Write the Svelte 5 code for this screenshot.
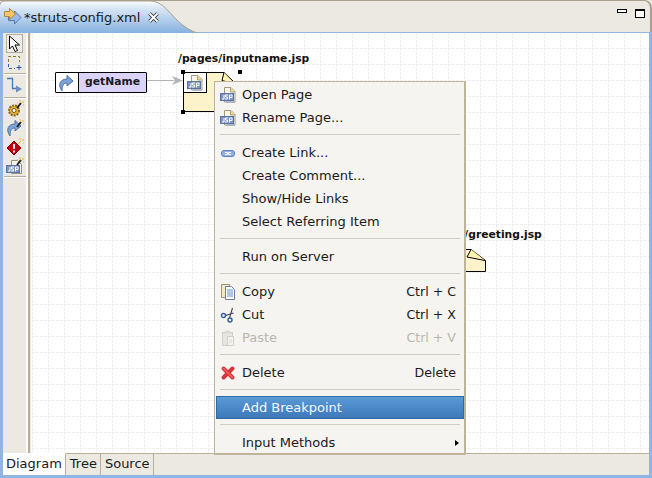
<script>
  const menu = [
    { label: "Open Page", icon: "jsp" },
    { label: "Rename Page...", icon: "jsp" },
    { sep: true },
    { label: "Create Link...", icon: "link" },
    { label: "Create Comment..." },
    { label: "Show/Hide Links" },
    { label: "Select Referring Item" },
    { sep: true },
    { label: "Run on Server" },
    { sep: true },
    { label: "Copy", icon: "copy", key: "Ctrl + C" },
    { label: "Cut", icon: "cut", key: "Ctrl + X" },
    { label: "Paste", icon: "paste", key: "Ctrl + V", disabled: true },
    { sep: true },
    { label: "Delete", icon: "delete", key: "Delete" },
    { sep: true },
    { label: "Add Breakpoint", active: true },
    { sep: true },
    { label: "Input Methods", sub: true },
  ];
  const tabs = ["Diagram", "Tree", "Source"];
</script>

{#snippet jsp()}
  <svg width="16" height="16" viewBox="0 0 16 16">
    <path d="M4.500 0.500h6.500l4 4v10.500h-10.500z" fill="#f8f6ee" stroke="#a89a78" />
    <path d="M10.500 0.500v4.500h4.500" fill="#ecd98c" stroke="#b5a36a" />
    <rect x="0.500" y="6.500" width="13" height="7" fill="#7d94c0" stroke="#5a74a4" />
    <path d="M4 8v4h-2M8 8h-2.500v2h2v2h-2.500M9.500 12.500v-4.500h2.500v2.500h-2.500" fill="none" stroke="#fff" />
    <path d="M6 15h9" stroke="#8fa3c8" />
  </svg>
{/snippet}

{#snippet sparkle()}
  <path d="M11 8l4-5" stroke="#222" stroke-width="2" />
  <path d="M13 1h2M17 1v2M17 5h1M11 3h1" stroke="#e8b820" />
{/snippet}

{#snippet curved()}
  <path d="M4 17C-1 10 3 5 9 5V1.500l6 5.500-6 5V9C5 9 4 12 4 17z" fill="#7ea3d8" stroke="#4a70a8" />
{/snippet}

<div class="view">
  <header class="head">
    <svg class="tab-bg" width="200" height="33" viewBox="0 0 200 33">
      <defs>
        <linearGradient id="tabfill" x1="0" y1="0" x2="0" y2="1">
          <stop offset="0" stop-color="#ffffff" />
          <stop offset="0.2" stop-color="#dce8f6" />
          <stop offset="1" stop-color="#86b2e0" />
        </linearGradient>
      </defs>
      <path d="M0 33V5Q0 1 5 1H150C168 1 172 24 197 33Z" fill="url(#tabfill)" />
      <path d="M0 5Q0 1 5 1H150C168 1 172 24 197 33" fill="none" stroke="#a9a08c" />
    </svg>
    <div class="tab">
      <svg width="20" height="20" viewBox="0 0 20 20">
        <path d="M5.500 7.500h6v-3.500l6.500 6.500-6.500 6.500v-3.500h-6z" fill="#9db9e6" stroke="#5878b0" />
        <path d="M1.500 4.500h5v-3l6 5.500-6 5.500v-3h-5z" fill="#f6c668" stroke="#b4863a" />
      </svg>
      <span class="tab-title">*struts-config.xml</span>
      <svg class="close" width="11" height="11" viewBox="0 0 11 11">
        <path d="M1.500 1.500l8 8M9.500 1.500l-8 8" stroke="#333" stroke-width="3.600" />
        <path d="M1.500 1.500l8 8M9.500 1.500l-8 8" stroke="#fff" stroke-width="1.800" />
      </svg>
    </div>
    <div class="win">
      <span class="min"></span>
      <span class="max"></span>
    </div>
  </header>

  <div class="body">
    <aside class="palette">
      <div class="tool sel">
        <svg width="13" height="17" viewBox="0 0 13 17"><path d="M1.500 1v13l3-3 2.500 5.500 2.500-1-2.500-5.500h4.500z" fill="#fff" stroke="#000" /></svg>
      </div>
      <div class="tool">
        <svg width="16" height="16" viewBox="0 0 16 16">
          <path d="M1.500 12V1.500H12.500V7" fill="none" stroke="#8a7a30" stroke-dasharray="3 2" />
          <path d="M1.500 9V13.500H8" fill="none" stroke="#2f60a8" stroke-dasharray="3 2" />
          <path d="M9.500 12.500h5M12 10v5" stroke="#2050a0" />
        </svg>
      </div>
      <hr />
      <div class="tool">
        <svg width="17" height="16" viewBox="0 0 17 16">
          <path d="M1 1.500h5.500v10h4" fill="none" stroke="#4a78b8" stroke-width="1.300" />
          <path d="M10 8.500l6 3.500-6 3.500z" fill="#6a8ec0" />
        </svg>
      </div>
      <hr class="gap" />
      <div class="tool">
        <svg width="18" height="18" viewBox="0 0 18 18">
          <circle cx="8" cy="10.500" r="5" fill="#e8b030" stroke="#8a6a20" stroke-width="2" stroke-dasharray="2 1" />
          <circle cx="8" cy="10.500" r="2" fill="#fff" stroke="#6a5a30" />
          {@render sparkle()}
        </svg>
      </div>
      <div class="tool">
        <svg width="18" height="18" viewBox="0 0 18 18">
          {@render curved()}
          {@render sparkle()}
        </svg>
      </div>
      <div class="tool">
        <svg width="18" height="18" viewBox="0 0 18 18">
          <path d="M8 3l7 7-7 7-7-7z" fill="#c00010" stroke="#800010" />
          <path d="M8 6v5M8 12.500v2" stroke="#fff" stroke-width="1.800" />
          <path d="M12 6l3-3M13 1h2M17 1v2M17 5h1" stroke="#e8b820" />
        </svg>
      </div>
      <div class="tool">
        <svg width="18" height="18" viewBox="0 0 18 18">
          <path d="M5.500 3.500h6l4 4v9h-10z" fill="#f5f2e8" stroke="#9a9078" />
          <rect x="0.500" y="8.500" width="13" height="7" fill="#7d94c0" stroke="#5a74a4" />
          <path d="M4 10v4h-2M8 10h-2.500v2h2v2h-2.500M9.500 14.500v-4.500h2.500v2.500h-2.500" fill="none" stroke="#fff" />
          {@render sparkle()}
        </svg>
      </div>
      <hr />
    </aside>

    <main class="canvas">
      <svg class="grid" width="100%" height="100%">
        <defs>
          <pattern id="dots" x="1" y="15" width="16" height="16" patternUnits="userSpaceOnUse">
            <path d="M0.500 0V16M0 0.500H16" stroke="#eeeeee" stroke-dasharray="3 1" fill="none" />
          </pattern>
        </defs>
        <rect width="100%" height="100%" fill="url(#dots)" />
        <path d="M116 47.500H143" stroke="#b4b4b4" />
        <path d="M141 43l11 4.500-11 4.500 3-4.500z" fill="#b4b4b4" />
      </svg>

      <div class="action node">
        <span class="action-icon">
          <svg width="18" height="18" viewBox="0 0 18 18">{@render curved()}</svg>
        </span>
        <span class="action-name">getName</span>
      </div>

      <div class="page-label input">/pages/inputname.jsp</div>
      <div class="page input-page">
        <svg class="sheet" width="58" height="41" viewBox="0 0 58 41">
          <path d="M0.500 0.500H41L52 11V39.500H0.500Z" fill="#fdf3cb" stroke="#000" />
          <path d="M41 0.500l-2 8 11 3" fill="#fff3b0" stroke="#000" />
        </svg>
        <span class="page-cell">{@render jsp()}</span>
        <i class="h tl"></i><i class="h bl"></i><i class="h tr"></i>
      </div>

      <div class="page-label greet">/pages/greeting.jsp</div>
      <svg class="greet-sheet" width="40" height="24" viewBox="0 0 40 24">
        <path d="M0.500 22.500H35.500V11.500L21 0.500H0.500Z" fill="#fdf3cb" stroke="#000" />
        <path d="M21 0.500L17 8 35 11.500" fill="#fff3b0" stroke="#000" />
      </svg>
    </main>
  </div>

  <footer class="tabs">
    {#each tabs as t, i}
      <span class="pane-tab" class:on={i === 0}>{t}</span>
    {/each}
  </footer>

  <div class="menu">
    {#each menu as m}
      {#if m.sep}
        <div class="sep"></div>
      {:else}
        <div class="item" class:active={m.active} class:disabled={m.disabled}>
          <span class="ico">
            {#if m.icon === "jsp"}
              {@render jsp()}
            {:else if m.icon === "link"}
              <svg width="16" height="16" viewBox="0 0 16 16">
                <rect x="1.500" y="5.500" width="13" height="6" rx="2.500" fill="#8fb0e0" stroke="#5f82c0" />
                <path d="M5 7.500h2.500v2H5M11 7.500H8.500v2H11" fill="none" stroke="#fff" />
              </svg>
            {:else if m.icon === "copy"}
              <svg width="16" height="16" viewBox="0 0 16 16">
                <path d="M1.500 0.500h8v13h-8z" fill="#efe6c8" stroke="#a8966a" />
                <path d="M5.500 2.500h6l3 3v10h-9z" fill="#fff" stroke="#6a7fa8" />
                <path d="M7 6h6M7 8h6M7 10h6M7 12h6" stroke="#6a8cc8" />
              </svg>
            {:else if m.icon === "cut"}
              <svg width="16" height="16" viewBox="0 0 16 16">
                <circle cx="3.500" cy="8.500" r="2" fill="none" stroke="#2f5f9f" stroke-width="1.400" />
                <circle cx="10" cy="13" r="2" fill="none" stroke="#2f5f9f" stroke-width="1.400" />
                <path d="M5.500 8.500l8-2.500M9.500 11l3-10" stroke="#445" stroke-width="1.100" />
              </svg>
            {:else if m.icon === "paste"}
              <svg width="16" height="16" viewBox="0 0 16 16">
                <rect x="2.500" y="2.500" width="10" height="13" fill="#e8e6e0" stroke="#d0cec6" />
                <rect x="5" y="0.500" width="5" height="3" fill="#dcdad2" />
                <path d="M7.500 6.500h6v9h-6z" fill="#f5f4f0" stroke="#d0cec6" />
                <path d="M9 10h3M9 12h3" stroke="#d8d6ce" />
              </svg>
            {:else if m.icon === "delete"}
              <svg width="16" height="16" viewBox="0 0 16 16">
                <path d="M3.500 3.500l9 9M12.500 3.500l-9 9" stroke="#d8343a" stroke-width="4" stroke-linecap="round" />
                <path d="M3.500 3.500l9 9" stroke="#ec6462" stroke-width="1.600" stroke-linecap="round" />
              </svg>
            {/if}
          </span>
          <span class="label">{m.label}</span>
          {#if m.key}<span class="key">{m.key}</span>{/if}
          {#if m.sub}<span class="arrow"></span>{/if}
        </div>
      {/if}
    {/each}
  </div>
</div>

<style>
  :global(body) {
    margin: 0;
  }
  .view {
    position: relative;
    width: 652px;
    height: 478px;
    box-sizing: border-box;
    display: flex;
    flex-direction: column;
    overflow: hidden;
    background: #ece9e2;
    font-family: "DejaVu Sans", sans-serif;
    font-size: 13px;
    color: #1a1a1a;
  }
  .head {
    position: relative;
    flex: 0 0 32px;
    display: flex;
    align-items: center;
    justify-content: space-between;
    border-top: 1px solid #a9a08c;
    border-right: 2px solid #a9a08c;
    border-top-right-radius: 8px;
    box-sizing: border-box;
  }
  .tab-bg {
    position: absolute;
    left: 0;
    top: -1px;
  }
  .tab {
    position: relative;
    display: flex;
    align-items: center;
    padding: 1px 0 0 3px;
  }
  .tab-title {
    margin-left: 1px;
  }
  .close {
    margin-left: 8px;
  }
  .win {
    display: flex;
    align-items: flex-start;
    gap: 8px;
    padding: 0 5px 6px 0;
  }
  .min {
    width: 8px;
    height: 2px;
    border: 1px solid #000;
    background: #fff;
  }
  .max {
    width: 8px;
    height: 6px;
    border: 1px solid #000;
    border-top-width: 2px;
    background: #fff;
  }
  .body {
    flex: 1;
    min-height: 0;
    display: flex;
    border-top: 1px solid #8fb6e2;
    border-left: 3px solid #8fb6e2;
    border-right: 3px solid #8fb6e2;
  }
  .palette {
    width: 23px;
    background: #ece9e2;
    border-right: 2px solid #fff;
    box-shadow: 2px 0 0 #b9ae9a;
    display: flex;
    flex-direction: column;
    align-items: center;
    padding-top: 1px;
    margin-right: 3px;
    flex: none;
  }
  .palette hr {
    width: 22px;
    height: 0;
    margin: 1px 0 0;
    border: none;
    border-top: 1px solid #b9ae9a;
    border-bottom: 1px solid #fff;
  }
  .palette hr.gap {
    margin-top: 3px;
  }
  .tool {
    width: 18px;
    height: 19px;
    display: flex;
    align-items: center;
    justify-content: center;
  }
  .tool.sel {
    width: 15px;
    height: 17px;
    border: 1px solid #b9ae9a;
    background: repeating-conic-gradient(#fff 0 25%, #e4e1da 0 50%) 0 0 / 2px 2px;
  }
  .canvas {
    position: relative;
    flex: 1;
    background: #fff;
    min-width: 0;
  }
  .grid {
    position: absolute;
    left: 0;
    top: 0;
  }
  .node {
    position: absolute;
  }
  .action {
    left: 24px;
    top: 39px;
    width: 92px;
    height: 21px;
    box-sizing: border-box;
    display: flex;
    border: 1px solid #000;
    border-radius: 1px;
    background: #fff;
  }
  .action-icon {
    width: 22px;
    border-right: 1px solid #000;
    display: flex;
    align-items: center;
    justify-content: center;
  }
  .action-name {
    flex: 1;
    background: #dcd4f8;
    text-align: center;
    font-size: 10.750px;
    font-weight: bold;
    line-height: 18px;
  }
  .page-label {
    position: absolute;
    font-size: 10.750px;
    font-weight: bold;
    color: #111;
    white-space: nowrap;
  }
  .page-label.input {
    left: 147px;
    top: 19px;
  }
  .page-label.greet {
    left: 393px;
    top: 195px;
  }
  .page {
    position: absolute;
    left: 152px;
    top: 39px;
    width: 58px;
    height: 41px;
  }
  .sheet {
    position: absolute;
    left: 0;
    top: 0;
  }
  .page-cell {
    position: absolute;
    left: 0;
    top: 0;
    width: 24px;
    height: 21px;
    box-sizing: border-box;
    border: 1px solid #000;
    background: #fff;
    display: flex;
    align-items: center;
    justify-content: center;
  }
  .h {
    position: absolute;
    width: 4px;
    height: 4px;
    background: #000;
  }
  .tl {
    left: -2px;
    top: -2px;
  }
  .bl {
    left: -2px;
    top: 38px;
  }
  .tr {
    left: 55px;
    top: -2px;
  }
  .greet-sheet {
    position: absolute;
    left: 419px;
    top: 216px;
  }
  .tabs {
    flex: 0 0 22px;
    display: flex;
    border: 3px solid #8fb6e2;
    border-top: none;
    box-sizing: content-box;
    background: #ece9e2;
    box-shadow: inset 0 1px 0 #b9ae9a;
  }
  .pane-tab {
    padding: 0 3px 0 4px;
    line-height: 19px;
    border-right: 1px solid #b9ae9a;
    border-top: 1px solid #b9ae9a;
  }
  .pane-tab.on {
    background: #fff;
    border-top-color: #fff;
    padding: 0 3px;
  }
  .menu {
    position: absolute;
    left: 214px;
    top: 81px;
    width: 252px;
    height: 374px;
    box-sizing: border-box;
    padding: 1px;
    background: #f6f4f0;
    border: 1px solid #bfb39b;
    border-width: 1px 2px 2px 1px;
  }
  .item {
    height: 23px;
    display: flex;
    align-items: center;
    box-sizing: border-box;
    padding-right: 7px;
    position: relative;
  }
  .item.active {
    background: linear-gradient(#5c9ad8, #3c78b8);
    box-shadow: inset 0 0 0 1px #2f6aa8;
    color: #f4f8fc;
    margin-right: -1px;
  }
  .item.disabled {
    color: #b8b6b0;
  }
  .ico {
    width: 26px;
    flex: none;
    padding-left: 4px;
    box-sizing: border-box;
    display: flex;
    align-items: center;
    height: 16px;
  }
  .label {
    flex: 1;
  }
  .key {
    white-space: nowrap;
    font-size: 12.600px;
  }
  .arrow {
    width: 0;
    height: 0;
    border-left: 4px solid #000;
    border-top: 3.500px solid transparent;
    border-bottom: 3.500px solid transparent;
    margin-right: -3px;
  }
  .sep {
    height: 12px;
    position: relative;
  }
  .sep::after {
    content: "";
    position: absolute;
    left: 4px;
    right: 3px;
    top: 5px;
    border-top: 1px solid #cfccc4;
  }
</style>
